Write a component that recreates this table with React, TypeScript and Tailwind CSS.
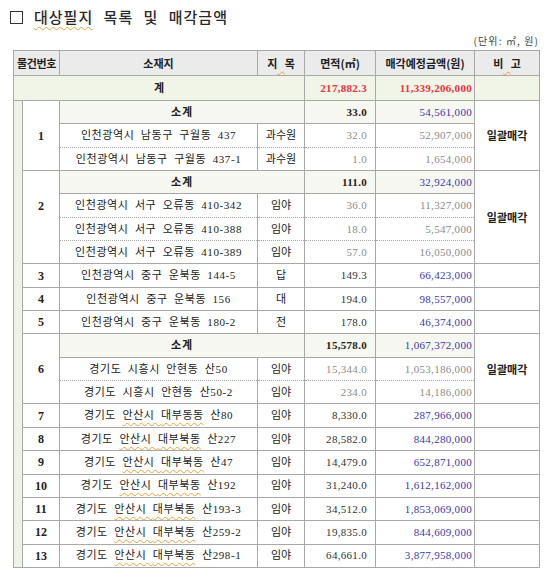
import React from 'react';

type SubRow = { addr: React.ReactNode; jimok: string; area: string; amount: string };
type Group = {
  no: string;
  subtotal?: { area: string; amount: string };
  rows: SubRow[];
  note?: string;
};

const squiggle =
  'underline decoration-wavy decoration-[#e6a23c] underline-offset-[3px] [text-decoration-thickness:1px]';

const ansan = (dong: string, lot: string) => (
  <>
    경기도 <span className={squiggle}>안산시 {dong}</span> {lot}
  </>
);

const groups: Group[] = [
  {
    no: '1',
    subtotal: { area: '33.0', amount: '54,561,000' },
    rows: [
      { addr: '인천광역시 남동구 구월동 437', jimok: '과수원', area: '32.0', amount: '52,907,000' },
      { addr: '인천광역시 남동구 구월동 437-1', jimok: '과수원', area: '1.0', amount: '1,654,000' },
    ],
    note: '일괄매각',
  },
  {
    no: '2',
    subtotal: { area: '111.0', amount: '32,924,000' },
    rows: [
      { addr: '인천광역시 서구 오류동 410-342', jimok: '임야', area: '36.0', amount: '11,327,000' },
      { addr: '인천광역시 서구 오류동 410-388', jimok: '임야', area: '18.0', amount: '5,547,000' },
      { addr: '인천광역시 서구 오류동 410-389', jimok: '임야', area: '57.0', amount: '16,050,000' },
    ],
    note: '일괄매각',
  },
  { no: '3', rows: [{ addr: '인천광역시 중구 운북동 144-5', jimok: '답', area: '149.3', amount: '66,423,000' }] },
  { no: '4', rows: [{ addr: '인천광역시 중구 운북동 156', jimok: '대', area: '194.0', amount: '98,557,000' }] },
  { no: '5', rows: [{ addr: '인천광역시 중구 운북동 180-2', jimok: '전', area: '178.0', amount: '46,374,000' }] },
  {
    no: '6',
    subtotal: { area: '15,578.0', amount: '1,067,372,000' },
    rows: [
      { addr: '경기도 시흥시 안현동 산50', jimok: '임야', area: '15,344.0', amount: '1,053,186,000' },
      { addr: '경기도 시흥시 안현동 산50-2', jimok: '임야', area: '234.0', amount: '14,186,000' },
    ],
    note: '일괄매각',
  },
  { no: '7', rows: [{ addr: ansan('대부동동', '산80'), jimok: '임야', area: '8,330.0', amount: '287,966,000' }] },
  { no: '8', rows: [{ addr: ansan('대부북동', '산227'), jimok: '임야', area: '28,582.0', amount: '844,280,000' }] },
  { no: '9', rows: [{ addr: ansan('대부북동', '산47'), jimok: '임야', area: '14,479.0', amount: '652,871,000' }] },
  { no: '10', rows: [{ addr: ansan('대부북동', '산192'), jimok: '임야', area: '31,240.0', amount: '1,612,162,000' }] },
  { no: '11', rows: [{ addr: ansan('대부북동', '산193-3'), jimok: '임야', area: '34,512.0', amount: '1,853,069,000' }] },
  { no: '12', rows: [{ addr: ansan('대부북동', '산259-2'), jimok: '임야', area: '19,835.0', amount: '844,609,000' }] },
  { no: '13', rows: [{ addr: ansan('대부북동', '산298-1'), jimok: '임야', area: '64,661.0', amount: '3,877,958,000' }] },
];

const totalRows = groups.reduce((n, g) => n + g.rows.length + (g.subtotal ? 1 : 0), 0);

const cell = 'border border-[#a8a8a8] p-0';
const rowH = 'h-[23.35px]';
const numText = 'text-[11px] tracking-[0.3px]';
const addrText = 'text-[11px] tracking-[0.6px] [word-spacing:3px] text-[#222]';

export default function App() {
  let bandPlaced = false;

  // left green strip of the outer table, spans every body row under 계
  const band = () => {
    if (bandPlaced) return null;
    bandPlaced = true;
    return <td rowSpan={totalRows} className={`${cell} bg-[#eef2e7]`} />;
  };

  return (
    <div className="w-[550px] h-[579px] bg-white pt-[8px] font-['Liberation_Serif','Noto_Sans_CJK_KR',serif] text-[#222]">
      <div className="flex items-center h-[18px] pl-[10px] gap-[11px]">
        <div className="w-[13px] h-[13px] border-[1.5px] border-[#333]" />
        <h1 className="text-[15px] font-medium tracking-[1px] [word-spacing:6px] text-[#2a2a2a] font-['Noto_Sans_CJK_KR',sans-serif]">
          <span className={squiggle}>대상필지</span> 목록 및 매각금액
        </h1>
      </div>
      <div className="mt-[9px] h-[12px] leading-[12px] pr-[11px] text-right text-[10px] tracking-[1.1px] text-[#444] font-['Noto_Sans_CJK_KR',sans-serif]">
        (단위: ㎡, 원)
      </div>

      <table className="mt-[3px] ml-[13px] w-[526px] table-fixed border-collapse">
        <colgroup>
          <col className="w-[9px]" />
          <col className="w-[37px]" />
          <col className="w-[198px]" />
          <col className="w-[47px]" />
          <col className="w-[71px]" />
          <col className="w-[99px]" />
          <col className="w-[65px]" />
        </colgroup>
        <thead>
          <tr className="h-[25px] bg-[#ebebeb] text-[11px] font-bold font-['Noto_Sans_CJK_KR',sans-serif]">
            <th colSpan={2} className={`${cell} tracking-[-0.4px]`}>물건번호</th>
            <th className={cell}>소재지</th>
            <th className={cell}>
              지<span className={squiggle}>&nbsp;&nbsp;&nbsp;</span>목
            </th>
            <th className={cell}>면적(㎡)</th>
            <th className={cell}>매각예정금액(원)</th>
            <th className={cell}>
              비<span className={squiggle}>&nbsp;&nbsp;&nbsp;</span>고
            </th>
          </tr>
        </thead>
        <tbody>
          <tr className="h-[25px] bg-[#f0f5e8]">
            <td colSpan={4} className={`${cell} text-center text-[11px] font-bold`}>계</td>
            <td className={`${cell} ${numText} text-right pr-[8px] font-bold text-[#e8343c]`}>217,882.3</td>
            <td className={`${cell} ${numText} text-right pr-[2px] font-bold text-[#e8343c]`}>11,339,206,000</td>
            <td className={cell} />
          </tr>

          {groups.map((g) => {
            if (!g.subtotal) {
              const r = g.rows[0];
              return (
                <tr key={g.no} className={rowH}>
                  {band()}
                  <td className={`${cell} text-center text-[12px] font-bold`}>{g.no}</td>
                  <td className={`${cell} text-center ${addrText}`}>{r.addr}</td>
                  <td className={`${cell} text-center text-[11px]`}>{r.jimok}</td>
                  <td className={`${cell} ${numText} text-right pr-[8px] text-[#333]`}>{r.area}</td>
                  <td className={`${cell} ${numText} text-right pr-[2px] text-[#3a3aa8]`}>{r.amount}</td>
                  <td className={cell} />
                </tr>
              );
            }
            const span = g.rows.length + 1;
            return (
              <React.Fragment key={g.no}>
                <tr className={`${rowH} bg-[#f7f7f1]`}>
                  {band()}
                  <td rowSpan={span} className={`${cell} bg-white align-top`}>
                    <div className="mt-[23.35px] h-[23.35px] flex items-center justify-center text-[12px] font-bold">
                      {g.no}
                    </div>
                  </td>
                  <td colSpan={2} className={`${cell} text-center text-[11px] font-bold tracking-[1px]`}>소계</td>
                  <td className={`${cell} ${numText} text-right pr-[8px] font-bold`}>{g.subtotal.area}</td>
                  <td className={`${cell} ${numText} text-right pr-[2px] text-[#3a3aa8]`}>{g.subtotal.amount}</td>
                  <td rowSpan={span} className={`${cell} bg-white text-center text-[11px] font-bold font-['Noto_Sans_CJK_KR',sans-serif]`}>
                    {g.note}
                  </td>
                </tr>
                {g.rows.map((r, i) => {
                  const first = i === 0;
                  const last = i === g.rows.length - 1;
                  const edge = `${first ? '' : '[border-top-style:dotted]'} ${last ? '' : '[border-bottom-style:dotted]'}`;
                  return (
                    <tr key={i} className={rowH}>
                      <td className={`${cell} ${edge} text-center ${addrText}`}>{r.addr}</td>
                      <td className={`${cell} ${edge} text-center text-[11px]`}>{r.jimok}</td>
                      <td className={`${cell} ${edge} ${numText} text-right pr-[8px] text-[#8c8c8c]`}>{r.area}</td>
                      <td className={`${cell} ${edge} ${numText} text-right pr-[2px] text-[#8c8c8c]`}>{r.amount}</td>
                    </tr>
                  );
                })}
              </React.Fragment>
            );
          })}
        </tbody>
      </table>
    </div>
  );
}
